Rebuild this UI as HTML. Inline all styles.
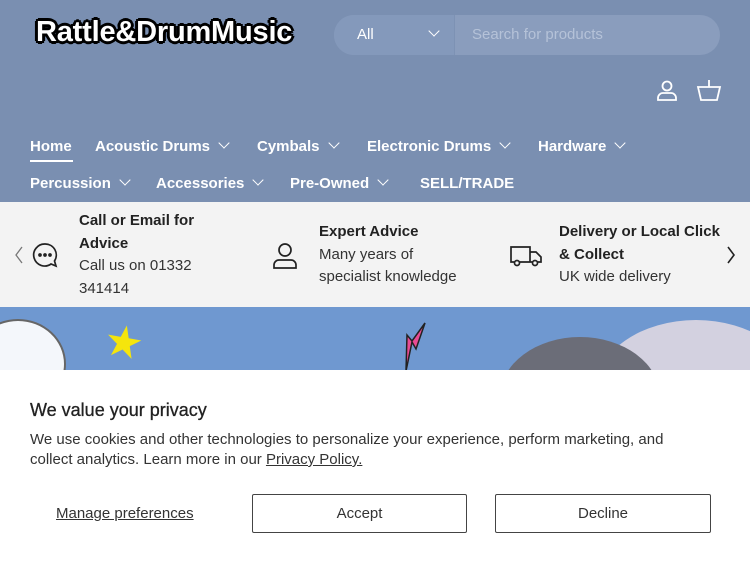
<!DOCTYPE html>
<html><head><meta charset="utf-8"><style>
*{margin:0;padding:0;box-sizing:border-box}
body{width:750px;height:563px;overflow:hidden;font-family:"Liberation Sans",sans-serif;background:#fff;position:relative}
.hdr{position:absolute;left:0;top:0;width:750px;height:202px;background:#7a8fb1}
.logo{position:absolute;left:36px;top:16px;font-size:29px;font-weight:bold;color:#fff;letter-spacing:-0.2px;
 text-shadow:-2px -2px 0 #000,2px -2px 0 #000,-2px 2px 0 #000,2px 2px 0 #000,0 3px 0 #000,0 -3px 0 #000,3px 0 0 #000,-3px 0 0 #000}
.search{position:absolute;left:334px;top:15px;width:386px;height:40px;border-radius:20px;background:#8a9dbd;overflow:hidden}
.search .all{position:absolute;left:0;top:0;width:121px;height:40px;background:#8499bb;border-right:1px solid #7d92b4;color:#fff;font-size:15px;line-height:40px;padding-left:23px}
.search .ph{position:absolute;left:138px;top:0;line-height:40px;font-size:15px;color:#b5c2d8}
.nav{position:absolute;color:#fff;font-weight:bold;font-size:15px}
.nav span{position:absolute;white-space:nowrap}
.chev{display:inline-block;width:8px;height:8px;border-right:1.5px solid #fff;border-bottom:1.5px solid #fff;transform:rotate(45deg);margin-left:10px;position:relative;top:-4px}
.strip{position:absolute;left:0;top:202px;width:750px;height:105px;background:#f3f3f3}
.strip .t{position:absolute;font-size:15px;color:#333;line-height:22.5px}
.strip b{color:#222}
.banner{position:absolute;left:0;top:307px;width:750px;height:63px;background:#6f98d0;overflow:hidden}
.ck{position:absolute;left:0;top:370px;width:750px;height:193px;background:#fff}
.btn{position:absolute;top:494px;height:39px;border:1px solid #444;border-radius:2px;font-size:15px;color:#333;text-align:center;line-height:37px}
</style></head><body>
<div class="hdr">
 <div class="logo">Rattle&amp;DrumMusic</div>
 <div class="search"><div class="all">All<span style="position:absolute;left:96px;top:12px;width:8px;height:8px;border-right:1.5px solid #fff;border-bottom:1.5px solid #fff;transform:rotate(45deg)"></span></div><div class="ph">Search for products</div></div>
 <svg style="position:absolute;left:655px;top:79px" width="24" height="24" viewBox="0 0 24 24" fill="none" stroke="#fff" stroke-width="1.8"><circle cx="12" cy="7" r="4.5"/><path d="M3 21v-2a5 5 0 0 1 5-5h8a5 5 0 0 1 5 5v2z"/></svg>
 <svg style="position:absolute;left:696px;top:79px" width="26" height="24" viewBox="0 0 26 24" fill="none" stroke="#fff" stroke-width="1.8"><path d="M13 1v7M2 8h22l-3 13H5z"/></svg>
 <div class="nav" style="left:30px;top:138px">
  <span style="left:0">Home</span>
  <span style="left:0;top:22px;width:43px;height:2px;background:#fff"></span>
  <span style="left:65px">Acoustic Drums<i class="chev"></i></span>
  <span style="left:227px">Cymbals<i class="chev"></i></span>
  <span style="left:337px">Electronic Drums<i class="chev"></i></span>
  <span style="left:508px">Hardware<i class="chev"></i></span>
  <span style="left:0;top:37px">Percussion<i class="chev"></i></span>
  <span style="left:126px;top:37px">Accessories<i class="chev"></i></span>
  <span style="left:260px;top:37px">Pre-Owned<i class="chev"></i></span>
  <span style="left:390px;top:37px">SELL/TRADE</span>
 </div>
</div>
<div class="strip">
 <svg style="position:absolute;left:14px;top:44px" width="10" height="18" viewBox="0 0 10 18" fill="none" stroke="#777" stroke-width="1.3"><path d="M8 1L2 9l6 8"/></svg>
 <svg style="position:absolute;left:31px;top:39px" width="28" height="28" viewBox="0 0 28 28" fill="none" stroke="#222" stroke-width="1.7"><path d="M14 3a11 11 0 1 0 6 20l5 2-1.5-5A11 11 0 0 0 14 3z"/><circle cx="9" cy="14" r="1" fill="#222"/><circle cx="14" cy="14" r="1" fill="#222"/><circle cx="19" cy="14" r="1" fill="#222"/></svg>
 <div class="t" style="left:79px;top:8px;width:150px"><b>Call or Email for Advice</b><br>Call us on 01332 341414</div>
 <svg style="position:absolute;left:272px;top:40px" width="26" height="28" viewBox="0 0 26 28" fill="none" stroke="#222" stroke-width="1.7"><circle cx="13" cy="8" r="6"/><path d="M2 26v-3a5 5 0 0 1 5-5h12a5 5 0 0 1 5 5v3z"/></svg>
 <div class="t" style="left:319px;top:19px;width:160px"><b>Expert Advice</b><br>Many years of<br>specialist knowledge</div>
 <svg style="position:absolute;left:510px;top:43px" width="32" height="22" viewBox="0 0 32 22" fill="none" stroke="#222" stroke-width="1.7"><path d="M1 2h19v15H1zM20 7h6l5 5v5h-11"/><circle cx="7" cy="18" r="2.5" fill="#f3f3f3"/><circle cx="25" cy="18" r="2.5" fill="#f3f3f3"/></svg>
 <div class="t" style="left:559px;top:19px;width:170px"><b>Delivery or Local Click &amp; Collect</b><br>UK wide delivery</div>
 <svg style="position:absolute;left:726px;top:44px" width="10" height="18" viewBox="0 0 10 18" fill="none" stroke="#222" stroke-width="1.6"><path d="M2 1l6 8-6 8"/></svg>
</div>
<div class="banner">
 <div style="position:absolute;left:-30px;top:12px;width:96px;height:90px;border-radius:50%;background:#f4f7fb;border:2px solid #666"></div>
 <div style="position:absolute;left:104px;top:14px;color:#f5e50c;font-size:44px;line-height:44px;transform:rotate(10deg)">★</div>
 <svg style="position:absolute;left:388px;top:14px" width="40" height="50" viewBox="0 0 40 50"><path d="M37 2L28 28l-4-7-6 29 1-36 5 6z" fill="#e94b93" stroke="#222" stroke-width="1.5"/></svg>
 <div style="position:absolute;left:596px;top:13px;width:200px;height:140px;border-radius:50%;background:#d3d1e0"></div>
 <div style="position:absolute;left:500px;top:30px;width:160px;height:120px;border-radius:50%;background:#6b6d78"></div>
</div>
<div class="ck">
 <div style="position:absolute;left:30px;top:30px;font-size:18px;color:#222;font-weight:500;-webkit-text-stroke:0.3px #222">We value your privacy</div>
 <div style="position:absolute;left:30px;top:60px;width:670px;font-size:15px;line-height:20px;color:#333;letter-spacing:0">We use cookies and other technologies to personalize your experience, perform marketing, and collect analytics. Learn more in our <u>Privacy Policy.</u></div>
 <div style="position:absolute;left:56px;top:135px;font-size:15px;color:#333;text-decoration:underline">Manage preferences</div>
</div>
<div class="btn" style="left:252px;width:215px">Accept</div>
<div class="btn" style="left:495px;width:216px">Decline</div>
</body></html>
